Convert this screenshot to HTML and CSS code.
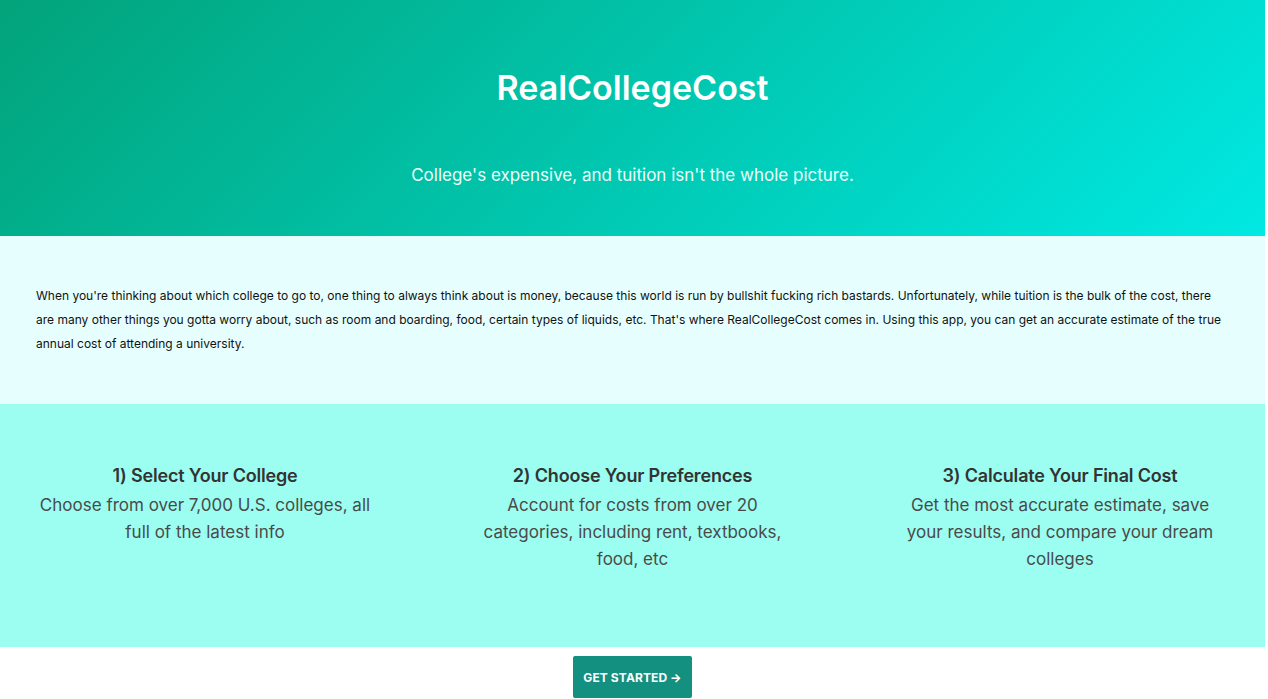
FILE: index.html
```html
<!DOCTYPE html>
<html lang="en">
<head>
<meta charset="utf-8">
<title>RealCollegeCost</title>
<link rel="stylesheet" href="styles.css">
</head>
<body>
<header class="hero">
  <h1 class="hero-title">RealCollegeCost</h1>
  <p class="hero-sub">College's expensive, and tuition isn't the whole picture.</p>
</header>
<section class="intro">
  <p class="intro-text">When you're thinking about which college to go to, one thing to always think about is money, because this world is run by bullshit fucking rich bastards. Unfortunately, while tuition is the bulk of the cost, there are many other things you gotta worry about, such as room and boarding, food, certain types of liquids, etc. That's where RealCollegeCost comes in. Using this app, you can get an accurate estimate of the true annual cost of attending a university.</p>
</section>
<section class="features">
  <div class="feature">
    <h2 class="feature-title">1) Select Your College</h2>
    <p class="feature-desc">Choose from over 7,000 U.S. colleges, all full of the latest info</p>
  </div>
  <div class="feature">
    <h2 class="feature-title">2) Choose Your Preferences</h2>
    <p class="feature-desc">Account for costs from over 20 categories, including rent, textbooks, food, etc</p>
  </div>
  <div class="feature">
    <h2 class="feature-title">3) Calculate Your Final Cost</h2>
    <p class="feature-desc">Get the most accurate estimate, save your results, and compare your dream colleges</p>
  </div>
</section>
<section class="cta">
  <a class="cta-button" href="#">GET STARTED →</a>
</section>
</body>
</html>
```

FILE: styles.css
```css
* { box-sizing: border-box; }

html, body {
  margin: 0;
  padding: 0;
}

body {
  font-family: Inter, "Noto Sans", "Liberation Sans", sans-serif;
  background: #ffffff;
  width: 1265px;
}

.hero {
  height: 236px;
  padding-top: 67px;
  display: flex;
  flex-direction: column;
  align-items: center;
  background: linear-gradient(135deg, #02a37a 0%, #00e9e3 100%);
}

.hero-title {
  margin: 0;
  font-size: 34px;
  line-height: 42px;
  font-weight: 600;
  color: #ffffff;
}

.hero-sub {
  margin: 52px 0 0;
  font-size: 17px;
  line-height: 28px;
  font-weight: 400;
  color: #ecfff9;
}

.intro {
  background: #e6fffe;
  padding: 48px 36px;
}

.intro-text {
  margin: 0;
  font-size: 12px;
  line-height: 24px;
  color: #111111;
}

.features {
  background: #9bfef0;
  padding: 58px 36px 74px;
  display: grid;
  grid-template-columns: repeat(3, 338px);
  justify-content: space-between;
}

.feature {
  text-align: center;
}

.feature-title {
  margin: 0;
  font-size: 18px;
  line-height: 28px;
  font-weight: 600;
  letter-spacing: -0.18px;
  color: #333333;
}

.feature-desc {
  margin: 2px 0 0;
  font-size: 17px;
  line-height: 27px;
  color: #4a4a4a;
}

.cta {
  display: flex;
  justify-content: center;
  padding: 9px 0 20px;
}

.cta-button {
  display: inline-block;
  background: #13907f;
  color: #ffffff;
  text-decoration: none;
  font-size: 12px;
  line-height: 18px;
  font-weight: 700;
  letter-spacing: 0.1px;
  padding: 13px 10px 11px;
  border-radius: 2px;
}
```
